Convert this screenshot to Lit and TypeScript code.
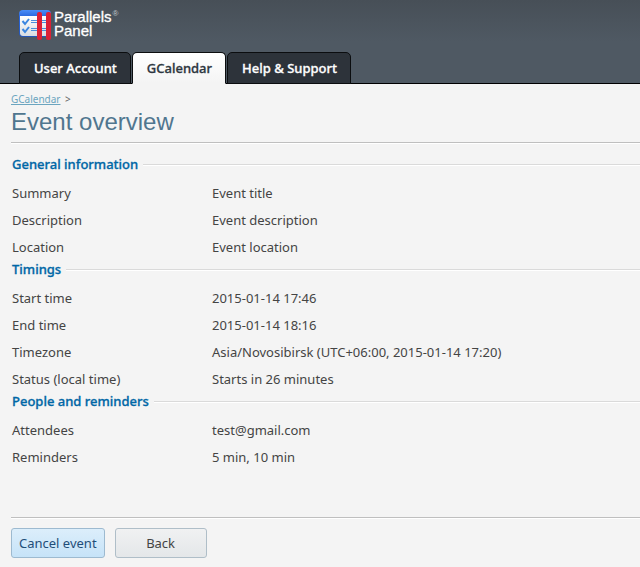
import { LitElement, html, css, svg } from "lit";
import { customElement, state } from "lit/decorators.js";
import { classMap } from "lit/directives/class-map.js";

interface Section {
  title: string;
  rows: [string, string][];
}

const TABS = ["User Account", "GCalendar", "Help & Support"];

const SECTIONS: Section[] = [
  {
    title: "General information",
    rows: [
      ["Summary", "Event title"],
      ["Description", "Event description"],
      ["Location", "Event location"],
    ],
  },
  {
    title: "Timings",
    rows: [
      ["Start time", "2015-01-14 17:46"],
      ["End time", "2015-01-14 18:16"],
      ["Timezone", "Asia/Novosibirsk (UTC+06:00, 2015-01-14 17:20)"],
      ["Status (local time)", "Starts in 26 minutes"],
    ],
  },
  {
    title: "People and reminders",
    rows: [
      ["Attendees", "test@gmail.com"],
      ["Reminders", "5 min, 10 min"],
    ],
  },
];

@customElement("panel-logo")
export class PanelLogo extends LitElement {
  static styles = css`
    :host {
      display: flex;
      gap: 3px;
      color: #fff;
      font: 15px/14px "Liberation Sans", Arial, sans-serif;
    }
    .mark {
      flex: none;
    }
    .text {
      display: flex;
      gap: 1px;
    }
    .name {
      -webkit-text-stroke: 0.3px #fff;
    }
    .reg {
      font-size: 8px;
      line-height: 8px;
      color: #c3c8cc;
    }
  `;

  render() {
    return html`
      <svg class="mark" width="32" height="30" viewBox="0 0 32 30" aria-hidden="true">
        <defs>
          <linearGradient id="frame" x1="0" y1="0" x2="0" y2="1">
            <stop offset="0" stop-color="#4a8df8" />
            <stop offset="0.25" stop-color="#2a66dc" />
            <stop offset="1" stop-color="#2456b8" />
          </linearGradient>
          <linearGradient id="sheet" x1="0" y1="0" x2="0" y2="1">
            <stop offset="0" stop-color="#ffffff" />
            <stop offset="1" stop-color="#d9dde2" />
          </linearGradient>
        </defs>
        <rect x="0" y="0" width="32" height="27" rx="4" fill="url(#frame)" />
        <path d="M1 6h30v17a3 3 0 0 1-3 3H4a3 3 0 0 1-3-3z" fill="url(#sheet)" />
        ${[8, 16].map(
          (y) => svg`
            <path d="M3.5 ${y + 3}l2.5 3 4-5" fill="none" stroke="#3b86e0" stroke-width="2" />
            <path d="M12 ${y + 2.5}h15M12 ${y + 4.5}h15" stroke="#4a8fdc" stroke-width="1" />
          `
        )}
        <rect x="18" y="2" width="5" height="28" rx="2" fill="#dc2136" />
        <rect x="27" y="2" width="5" height="28" rx="2" fill="#dc2136" />
      </svg>
      <div class="text">
        <div class="name">Parallels<br />Panel</div>
        <span class="reg">®</span>
      </div>
    `;
  }
}

@customElement("detail-section")
export class DetailSection extends LitElement {
  static properties = { section: { attribute: false } };
  declare section: Section;

  static styles = css`
    :host {
      display: block;
    }
    .heading {
      display: flex;
      align-items: center;
      gap: 5px;
      margin: 0 0 8px;
      font-size: 13px;
      line-height: 16px;
      font-weight: 500;
      color: #0067a6;
      -webkit-text-stroke: 0.3px currentColor;
    }
    .heading::after {
      content: "";
      flex: 1;
      height: 1px;
      background: #dadada;
      box-shadow: 0 1px #fff;
    }
    .rows {
      margin: 0;
    }
    .row {
      display: grid;
      grid-template-columns: 200px 1fr;
      line-height: 27px;
    }
    dd {
      margin: 0;
    }
  `;

  render() {
    return html`
      <h2 class="heading">${this.section.title}</h2>
      <dl class="rows">
        ${this.section.rows.map(
          ([name, value]) => html`<div class="row"><dt>${name}</dt><dd>${value}</dd></div>`
        )}
      </dl>
    `;
  }
}

@customElement("app-root")
export class AppRoot extends LitElement {
  @state() private active = "GCalendar";

  static styles = css`
    :host {
      display: block;
      min-height: 100vh;
      background: #f4f4f4;
      color: #444;
      font: 13px/16px "Noto Sans", "Open Sans", sans-serif;
    }
    .header {
      display: flex;
      flex-direction: column;
      gap: 12px;
      padding: 10px 19px 0;
      background: linear-gradient(#474f57, #4f5963 50%);
      border-bottom: 1px solid #000;
    }
    .tabs {
      display: flex;
      gap: 1px;
      margin-bottom: -1px;
    }
    .tab {
      box-sizing: border-box;
      height: 32px;
      padding: 0 13px 0 14px;
      border: 1px solid #0b0d0f;
      border-radius: 5px 5px 0 0;
      background: #2d333a;
      color: #fff;
      font: 500 13px/30px "Noto Sans", "Open Sans", sans-serif;
      -webkit-text-stroke: 0.3px currentColor;
    }
    .tab.current {
      border-bottom-color: #f4f4f4;
      background: linear-gradient(#fff, #f4f4f4);
      color: #2d3640;
    }
    .main {
      padding: 8px 0 0 11px;
    }
    .path {
      font-size: 10px;
      line-height: 15px;
      color: #666;
    }
    .path a {
      margin-right: 2px;
      color: #6ba5bf;
    }
    .title {
      margin: 0 0 13px;
      padding-bottom: 5px;
      border-bottom: 1px solid #bfbfbf;
      box-shadow: 0 1px #fff;
      color: #50768f;
      font: 24px/30px "Liberation Sans", Arial, sans-serif;
    }
    .details {
      padding-left: 1px;
    }
    .actions {
      display: flex;
      gap: 10px;
      margin-top: 46px;
      padding: 10px 0 9px;
      border-top: 1px solid #bfbfbf;
      box-shadow: inset 0 1px #fff;
    }
    .button {
      min-width: 92px;
      height: 30px;
      padding: 0 7px;
      border: 1px solid #afbec8;
      border-radius: 3px;
      background: linear-gradient(#f0f1f2, #e4e7e9);
      color: #444;
      font: 13px/28px "Noto Sans", "Open Sans", sans-serif;
    }
    .button.primary {
      border-color: #9dbad0;
      background: linear-gradient(#dceefb, #c6e3f8);
      color: #1f4e79;
    }
  `;

  render() {
    return html`
      <header class="header">
        <panel-logo></panel-logo>
        <nav class="tabs">
          ${TABS.map(
            (tab) => html`<button
              class=${classMap({ tab: true, current: tab === this.active })}
              @click=${() => (this.active = tab)}
            >${tab}</button>`
          )}
        </nav>
      </header>
      <main class="main">
        <nav class="path"><a href="#">GCalendar</a> &gt;</nav>
        <h1 class="title">Event overview</h1>
        <div class="details">
          ${SECTIONS.map((s) => html`<detail-section .section=${s}></detail-section>`)}
        </div>
        <div class="actions">
          <button class="button primary">Cancel event</button>
          <button class="button">Back</button>
        </div>
      </main>
    `;
  }
}
